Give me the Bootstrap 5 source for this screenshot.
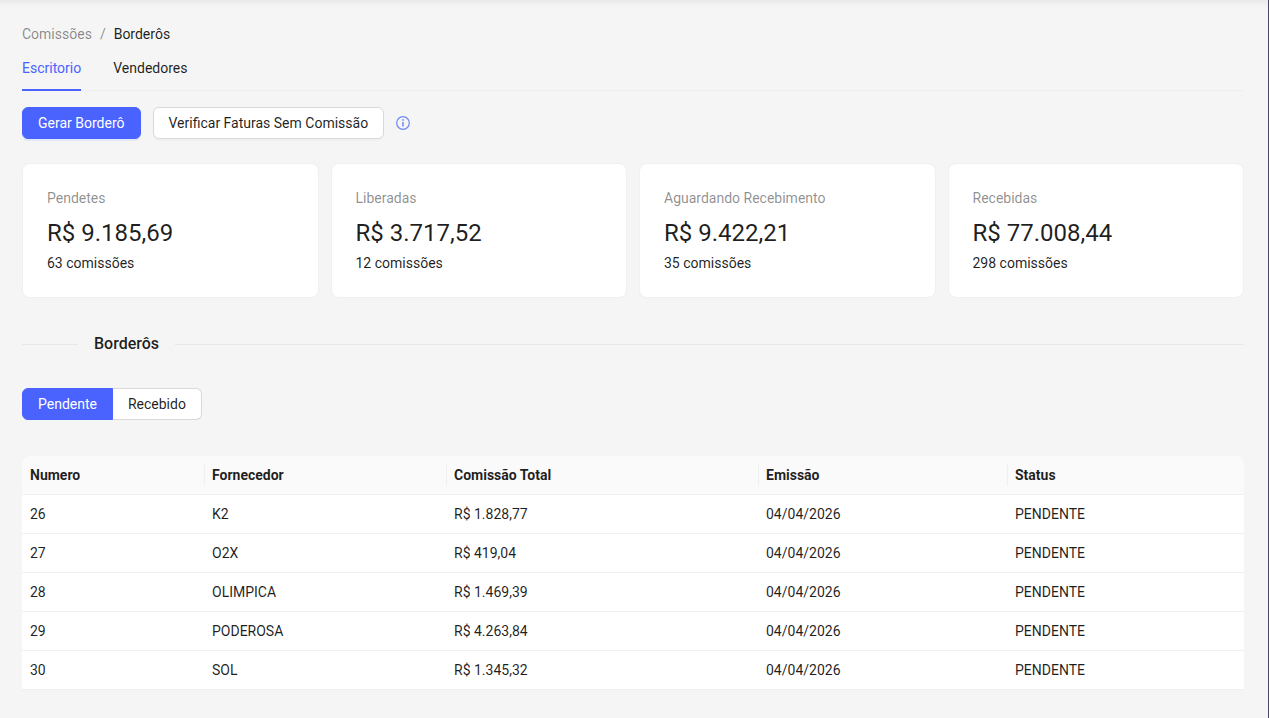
<!doctype html>
<html lang="pt-BR">
  <head>
    <meta charset="utf-8">
    <meta name="viewport" content="width=device-width, initial-scale=1">
    <title>Borderôs</title>
    <link href="https://cdn.jsdelivr.net/npm/bootstrap@5.3.0/dist/css/bootstrap.min.css" rel="stylesheet">
    <style>
      html, body { height: 100%; }
      body {
        background: #f5f5f5;
        color: rgba(0,0,0,.88);
        font-family: Roboto, "Liberation Sans", sans-serif;
        font-size: 14px;
        overflow: hidden;
      }
      .page-wrap {
        height: 718px;
        padding: 26px 24px 0 22px;
        border-right: 1px solid #4a4560;
        box-shadow: inset 0 8px 8px -8px rgba(0,0,0,.1);
      }
      .crumbs { margin: 0; line-height: 16px; color: rgba(0,0,0,.45); }
      .crumbs .breadcrumb-item + .breadcrumb-item { padding-left: 8px; }
      .crumbs .breadcrumb-item + .breadcrumb-item::before { padding-right: 8px; color: rgba(0,0,0,.45); }
      .crumbs .breadcrumb-item.active { color: rgba(0,0,0,.88); }
      .tab-row { margin-top: 8px; gap: 32px; border-bottom: 1px solid #eeeeee; }
      .tab-row .nav-link {
        padding: 10px 0 12px;
        line-height: 17px;
        color: rgba(0,0,0,.88);
        border-bottom: 2px solid transparent;
        margin-bottom: -1px;
      }
      .tab-row .nav-link.active { color: #4a63ff; border-bottom-color: #4a63ff; }
      .tool-row { margin-top: 16px; height: 32px; gap: 12px; }
      .btn-main, .btn-plain {
        font-size: 14px;
        line-height: 22px;
        padding: 4px 15px;
        border-radius: 6px;
      }
      .btn-main { background: #4a63ff; border: 1px solid #4a63ff; color: #fff; box-shadow: 0 2px 0 rgba(5,95,255,.08); }
      .btn-plain { background: #fff; border: 1px solid #d9d9d9; color: rgba(0,0,0,.88); box-shadow: 0 2px 0 rgba(0,0,0,.02); }
      .info-icon { display: block; }
      .stat-row { margin-top: 24px; display: grid; grid-template-columns: repeat(4, 1fr); gap: 12px; }
      .stat-box {
        background: #fff;
        border: 1px solid #f0f0f0;
        border-radius: 8px;
        height: 135px;
        padding: 23px 24px 0;
      }
      .stat-title { color: rgba(0,0,0,.45); line-height: 22px; }
      .stat-value { font-size: 24px; line-height: 32px; margin-top: 8px; }
      .stat-count { line-height: 22px; margin-top: 3px; }
      .divider-row { margin-top: 34px; height: 24px; font-size: 16px; font-weight: 500; }
      .divider-row::before, .divider-row::after { content: ""; border-top: 1px solid #e8e8e8; }
      .divider-row::before { width: 56px; }
      .divider-row::after { flex: 1; }
      .divider-row span { padding: 0 16px; }
      .seg-group { margin-top: 32px; display: flex; }
      .seg-group .btn { font-size: 14px; line-height: 22px; padding: 4px 15px; }
      .seg-group .btn:first-child { background: #4a63ff; border: 1px solid #4a63ff; color: #fff; border-radius: 6px 0 0 6px; }
      .seg-group .btn:last-child { background: #fff; border: 1px solid #d9d9d9; border-left: 0; color: rgba(0,0,0,.88); border-radius: 0 6px 6px 0; }
      .data-wrap { margin-top: 36px; border-radius: 8px 8px 0 0; overflow: hidden; }
      .data-table { margin: 0; table-layout: fixed; width: 100%; color: rgba(0,0,0,.88); font-size: 14px; }
      .data-table th, .data-table td { padding: 8px; height: 39px; line-height: 22px; border-bottom: 1px solid #f0f0f0; background: #fff; color: rgba(0,0,0,.88); }
      .data-table th { background: #fafafa; font-weight: 700; height: 38px; padding: 7px 8px 8px; position: relative; }
      .data-table th + th::before {
        content: "";
        position: absolute;
        left: 0;
        top: 50%;
        width: 1px;
        height: 22px;
        transform: translateY(-50%);
        background: #f0f0f0;
      }
      .col-num { width: 182px; }
      .col-forn { width: 242px; }
      .col-total { width: 312px; }
      .col-emis { width: 249px; }
    </style>
  </head>
  <body>
    <div class="page-wrap">
      <nav aria-label="breadcrumb">
        <ol class="breadcrumb crumbs">
          <li class="breadcrumb-item">Comissões</li>
          <li class="breadcrumb-item active" aria-current="page">Borderôs</li>
        </ol>
      </nav>

      <ul class="nav tab-row">
        <li class="nav-item"><a class="nav-link active" href="#">Escritorio</a></li>
        <li class="nav-item"><a class="nav-link" href="#">Vendedores</a></li>
      </ul>

      <div class="tool-row d-flex align-items-center">
        <button class="btn btn-main" type="button">Gerar Borderô</button>
        <button class="btn btn-plain" type="button">Verificar Faturas Sem Comissão</button>
        <svg class="info-icon" width="14" height="14" viewBox="0 0 14 14" fill="none" stroke="#6f88f8" stroke-width="1.2">
          <circle cx="7" cy="7" r="6.3"/>
          <path d="M7 6V10.6" stroke-width="1.5"/>
          <circle cx="7" cy="3.9" r=".9" fill="#6f88f8" stroke="none"/>
        </svg>
      </div>

      <div class="stat-row">
        <div class="stat-box">
          <div class="stat-title">Pendetes</div>
          <div class="stat-value">R$ 9.185,69</div>
          <div class="stat-count">63 comissões</div>
        </div>
        <div class="stat-box">
          <div class="stat-title">Liberadas</div>
          <div class="stat-value">R$ 3.717,52</div>
          <div class="stat-count">12 comissões</div>
        </div>
        <div class="stat-box">
          <div class="stat-title">Aguardando Recebimento</div>
          <div class="stat-value">R$ 9.422,21</div>
          <div class="stat-count">35 comissões</div>
        </div>
        <div class="stat-box">
          <div class="stat-title">Recebidas</div>
          <div class="stat-value">R$ 77.008,44</div>
          <div class="stat-count">298 comissões</div>
        </div>
      </div>

      <div class="divider-row d-flex align-items-center"><span>Borderôs</span></div>

      <div class="seg-group">
        <button class="btn" type="button">Pendente</button>
        <button class="btn" type="button">Recebido</button>
      </div>

      <div class="data-wrap">
        <table class="table data-table">
          <thead>
            <tr>
              <th class="col-num">Numero</th>
              <th class="col-forn">Fornecedor</th>
              <th class="col-total">Comissão Total</th>
              <th class="col-emis">Emissão</th>
              <th>Status</th>
            </tr>
          </thead>
          <tbody>
            <tr><td>26</td><td>K2</td><td>R$ 1.828,77</td><td>04/04/2026</td><td>PENDENTE</td></tr>
            <tr><td>27</td><td>O2X</td><td>R$ 419,04</td><td>04/04/2026</td><td>PENDENTE</td></tr>
            <tr><td>28</td><td>OLIMPICA</td><td>R$ 1.469,39</td><td>04/04/2026</td><td>PENDENTE</td></tr>
            <tr><td>29</td><td>PODEROSA</td><td>R$ 4.263,84</td><td>04/04/2026</td><td>PENDENTE</td></tr>
            <tr><td>30</td><td>SOL</td><td>R$ 1.345,32</td><td>04/04/2026</td><td>PENDENTE</td></tr>
          </tbody>
        </table>
      </div>
    </div>
    <script src="https://cdn.jsdelivr.net/npm/bootstrap@5.3.0/dist/js/bootstrap.bundle.min.js"></script>
  </body>
</html>
